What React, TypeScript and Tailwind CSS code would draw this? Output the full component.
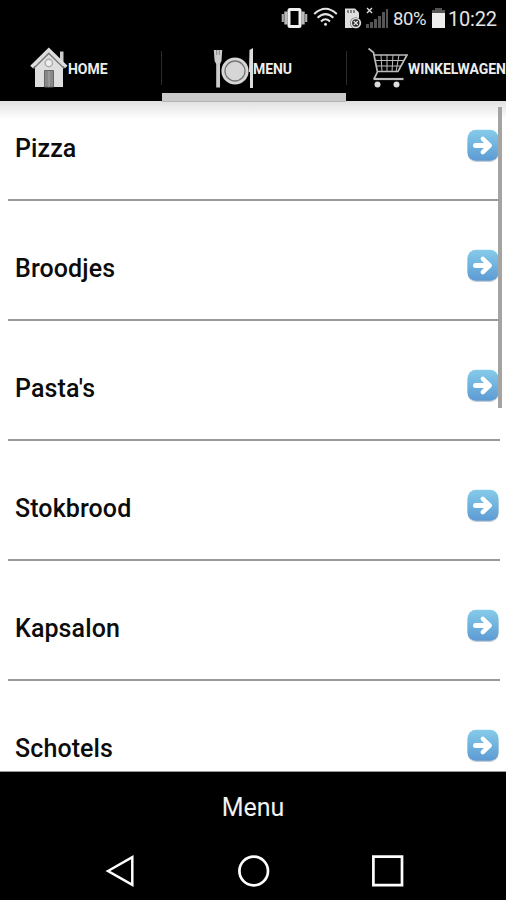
const categories = ["Pizza", "Broodjes", "Pasta's", "Stokbrood", "Kapsalon", "Schotels"];

export default function App() {
  return (
    <main className="flex h-[900px] w-[506px] flex-col overflow-hidden bg-black font-['Roboto',sans-serif]">
      <StatusBar />
      <TabBar />

      <section className="relative h-[671px] shrink-0 overflow-hidden border-b border-[#999] bg-white">
        <div className="absolute inset-x-0 top-0 h-[18px] bg-linear-to-b/srgb from-[#e0e0e0] to-white" />
        <div className="absolute top-0 left-[162px] h-px w-[184px] bg-[#b5b5b5]" />
        <ul className="relative -mt-[20px] pr-[6px] pl-2">
          {categories.map((name) => (
            <CategoryRow key={name} name={name} />
          ))}
        </ul>
        <div className="absolute top-[6px] right-[4px] h-[301px] w-[4px] bg-[#a3a3a3]" />
      </section>

      <footer className="flex h-[70px] shrink-0 items-center justify-center pt-px text-[25px] text-[#f2f2f2]">
        Menu
      </footer>
      <NavigationBar />
    </main>
  );
}

function StatusBar() {
  return (
    <header className="flex h-9 shrink-0 items-center pl-[281px] text-[#e4e4e4]">
      <VibrateIcon />
      <WifiIcon />
      <SimIcon />
      <SignalIcon />
      <span className="ml-[4px] w-[38px] pt-px text-[18.5px] leading-9 tracking-[-0.4px]">80%</span>
      <BatteryIcon />
      <span className="ml-[2px] pt-px text-[20px] leading-9 tracking-[-0.2px]">10:22</span>
    </header>
  );
}

function TabBar() {
  return (
    <nav className="flex h-[65px] w-[530px] shrink-0 text-[14px] leading-none font-bold tracking-[-0.05px] text-[#eee]">
      <div className="flex w-[162px] pl-[29px]">
        <HomeIcon />
        <span className="mt-[26px] -ml-px">HOME</span>
      </div>
      <div className="relative flex w-[184px] pl-[51px]">
        <span className="absolute top-[15px] -left-px h-[34px] w-px bg-[#2b2b2b]" />
        <PlateIcon />
        <span className="mt-[26px] -ml-[2px]">MENU</span>
        <span className="absolute inset-x-0 bottom-0 h-2 bg-[#c9c9c9]" />
      </div>
      <div className="relative flex w-[184px] pl-[22px]">
        <span className="absolute top-[15px] left-0 h-[34px] w-px bg-[#2b2b2b]" />
        <CartIcon />
        <span className="mt-[26px]">WINKELWAGEN</span>
      </div>
    </nav>
  );
}

function CategoryRow({ name }: { name: string }) {
  return (
    <li className="flex h-[120px] items-center justify-between border-b-2 border-[#999] pt-[16px] pr-px pl-[7px]">
      <span className="mt-[2px] text-[25px] leading-8 font-medium tracking-[0.1px] text-[#0c0c0c]">{name}</span>
      <ArrowIcon />
    </li>
  );
}

function NavigationBar() {
  return (
    <div className="flex h-[58px] shrink-0 items-center pl-[105px]">
      <svg width="30" height="34" viewBox="0 0 30 34" fill="none" stroke="#fff" strokeWidth="2.5">
        <path d="M3 17 27.3 3.2v27.6Z" />
      </svg>
      <svg className="ml-[102px]" width="34" height="34" viewBox="0 0 34 34" fill="none" stroke="#fff" strokeWidth="2.7">
        <circle cx="16.7" cy="17" r="14.3" />
      </svg>
      <svg className="ml-[100px]" width="34" height="34" viewBox="0 0 34 34" fill="none" stroke="#fff" strokeWidth="2.7">
        <path d="M2.4 2.6h28.6v28.6H2.4Z" />
      </svg>
    </div>
  );
}

function ArrowIcon() {
  return (
    <svg className="-mt-[4px]" width="32" height="34" viewBox="0 0 32 34">
      <defs>
        <linearGradient id="arrow" x1="0" y1="0" x2="0" y2="1">
          <stop offset="0" stopColor="#86cbe9" />
          <stop offset="1" stopColor="#5c9bd3" />
        </linearGradient>
      </defs>
      <rect x="0.5" y="2" width="31" height="31" rx="8.5" fill="#c3ccd3" />
      <rect x="0.5" y="0.8" width="31" height="31" rx="8.5" fill="url(#arrow)" />
      <path d="M8.5 16.5h13" fill="none" stroke="#fff" strokeWidth="5" strokeLinecap="round" />
      <path d="m15.8 9.8 7 6.7-7 6.7" fill="none" stroke="#fff" strokeWidth="4.4" strokeLinecap="round" strokeLinejoin="round" />
    </svg>
  );
}

function VibrateIcon() {
  return (
    <svg width="27" height="22" viewBox="0 0 27 22" fill="none">
      <rect x="8" y="2.5" width="11" height="17" rx="1" stroke="#f0f0f0" strokeWidth="3" />
      <path d="M5 4.5v13M22 4.5v13" stroke="#bbb" strokeWidth="3.4" />
      <path d="M1.8 7v8M25.2 7v8" stroke="#aaa" strokeWidth="2.2" />
    </svg>
  );
}

function WifiIcon() {
  return (
    <svg className="mt-[-2px] ml-[5px]" width="25" height="20" viewBox="0 0 25 20" fill="none" stroke="#e4e4e4" strokeWidth="2">
      <path d="M1.2 7Q12.5-3.4 23.8 7M4.6 10.8Q12.5 3.4 20.4 10.8M8 14.4Q12.5 10.2 17 14.4" />
      <circle cx="12.5" cy="17.2" r="1.5" fill="#e4e4e4" stroke="none" />
    </svg>
  );
}

function SimIcon() {
  return (
    <svg className="ml-[6px]" width="18" height="22" viewBox="0 0 18 22" fill="none">
      <path d="M1 1.5h10l4 4V21H1Z" fill="#dedede" />
      <path d="M4 3v3M7 3v3M10 3v3" stroke="#555" strokeWidth="1.3" />
      <circle cx="11.8" cy="16" r="5.6" fill="#222" />
      <circle cx="11.8" cy="16" r="4.5" stroke="#dedede" strokeWidth="1.7" />
      <path d="m9.8 14 4 4m0-4-4 4" stroke="#dedede" strokeWidth="1.4" />
    </svg>
  );
}

function SignalIcon() {
  return (
    <svg className="ml-[3px]" width="24" height="22" viewBox="0 0 24 22">
      <path d="M1 17h3v4H1ZM5 15h3v6H5ZM9 12h3v9H9ZM13 9h3v12h-3ZM17 5h3v16h-3ZM21 2h2v19h-2Z" fill="#555" />
      <path d="m2 1 5 5m0-5-5 5" stroke="#ddd" strokeWidth="1.4" />
    </svg>
  );
}

function BatteryIcon() {
  return (
    <svg width="15" height="22" viewBox="0 0 15 22">
      <path d="M4 1h7v2h3v4H1V3h3Z" fill="#555" />
      <path d="M1 6h13v15H1Z" fill="#ededed" />
    </svg>
  );
}

function HomeIcon() {
  return (
    <svg className="mt-[10px]" width="40" height="44" viewBox="0 0 40 44">
      <path d="M31 5.5h3.5V17H31Z" fill="#ccc" />
      <path d="M6 19 20 6l14 13v22H6Z" fill="#dedede" />
      <path d="m2.5 21 17.3-17 17.5 17" fill="none" stroke="#ddd" strokeWidth="3.6" />
      <path d="M4.5 22.5 19.8 7.5l15.5 15" fill="none" stroke="#777" strokeWidth="1.3" />
      <circle cx="19.8" cy="17" r="3.7" fill="#ededed" stroke="#aaa" strokeWidth="1.4" />
      <path d="M15.5 24.5h9V41h-9Z" fill="#888" stroke="#666" />
      <path d="M20 25v16" stroke="#aaa" />
    </svg>
  );
}

function PlateIcon() {
  return (
    <svg className="mt-[10px]" width="42" height="44" viewBox="0 0 42 44" fill="none">
      <path d="M.8 4h8.4l-.7 11-1.5 3v23.5H3.2V18l-1.6-3Z" fill="#ccc" />
      <path d="M3.6 4v5M6.3 4v5" stroke="#777" strokeWidth=".8" />
      <circle cx="22" cy="25" r="13.6" fill="#d6d6d6" />
      <circle cx="22" cy="25" r="10" stroke="#777" strokeWidth="1.3" />
      <path d="M36.5 4 40 2v40h-3V26h-1Z" fill="#ddd" />
    </svg>
  );
}

function CartIcon() {
  return (
    <svg className="mt-[10px]" width="40" height="44" viewBox="0 0 40 44" fill="none" stroke="#bbb">
      <path d="m.5 2.5 5 4 4 19.5-3.5 7M6 9h33l-9 16.5H9" strokeWidth="1.7" />
      <path d="M5.5 33h30" strokeWidth="2.2" />
      <path d="M7 14.5h29M8 20h25M13 9l1 17M19 9v17M25 9l-1 17M31 9l-3 17" strokeWidth="1" />
      <circle cx="9.5" cy="38.5" r="3" fill="#ddd" stroke="none" />
      <circle cx="28.5" cy="38.5" r="3" fill="#ddd" stroke="none" />
    </svg>
  );
}
